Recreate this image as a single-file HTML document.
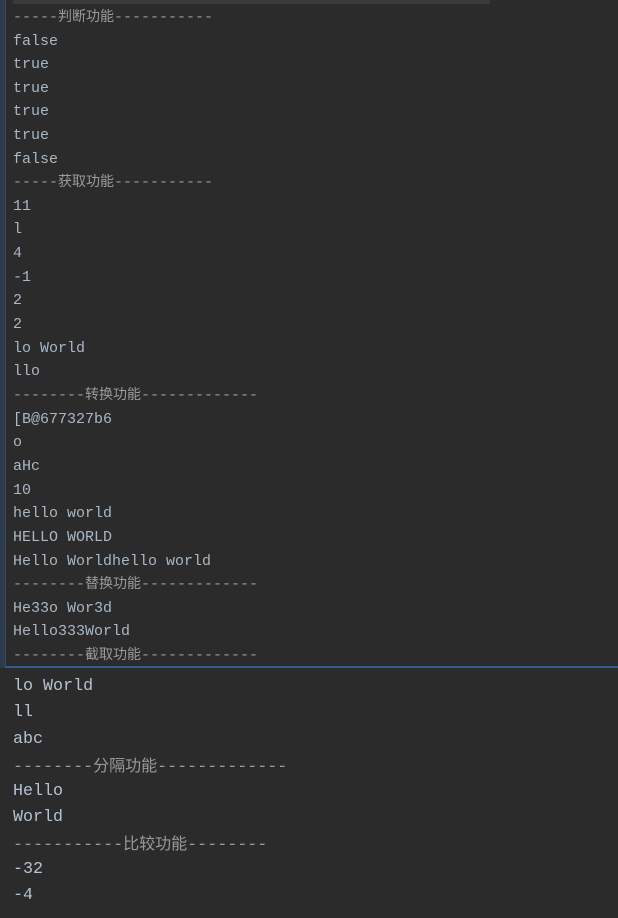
<!DOCTYPE html>
<html><head><meta charset="utf-8"><style>
body{margin:0;width:618px;height:918px;background:#2b2b2b;overflow:hidden;position:relative;font-family:"Liberation Mono","Noto Sans CJK SC",monospace}
#strip{position:absolute;left:0;top:0;width:5px;height:668px;background:#2c3a4e}
#top{position:absolute;left:5px;top:0;width:613px;height:666px;background:#2b2b2b;border-left:1px solid #3d4a5a;border-bottom:2px solid #2f5c8c}
#bar{position:absolute;left:13px;top:0;width:477px;height:4px;background:#3a3a3a}
.l{position:absolute;left:13px;white-space:pre;color:#a9b7c6;line-height:20px;margin-top:2px}
.l.c{margin-top:0}
.t{font-size:15px}
.b{font-size:16.7px;color:#b4c2d2}
.c{color:#9a9a9a}
.t .k{font-size:14px;font-family:"Noto Sans CJK SC",sans-serif}
.b .k{font-size:16px;font-family:"Noto Sans CJK SC",sans-serif}
</style></head><body>
<div id="strip"></div>
<div id="top"></div>
<div id="bar"></div>
<div class="l t c" style="top:6px">-----<span class="k">判断功能</span>-----------</div>
<div class="l t" style="top:30px">false</div>
<div class="l t" style="top:53px">true</div>
<div class="l t" style="top:77px">true</div>
<div class="l t" style="top:100px">true</div>
<div class="l t" style="top:124px">true</div>
<div class="l t" style="top:148px">false</div>
<div class="l t c" style="top:171px">-----<span class="k">获取功能</span>-----------</div>
<div class="l t" style="top:195px">11</div>
<div class="l t" style="top:218px">l</div>
<div class="l t" style="top:242px">4</div>
<div class="l t" style="top:266px">-1</div>
<div class="l t" style="top:289px">2</div>
<div class="l t" style="top:313px">2</div>
<div class="l t" style="top:337px">lo World</div>
<div class="l t" style="top:360px">llo</div>
<div class="l t c" style="top:384px">--------<span class="k">转换功能</span>-------------</div>
<div class="l t" style="top:408px">[B@677327b6</div>
<div class="l t" style="top:431px">o</div>
<div class="l t" style="top:455px">aHc</div>
<div class="l t" style="top:479px">10</div>
<div class="l t" style="top:502px">hello world</div>
<div class="l t" style="top:526px">HELLO WORLD</div>
<div class="l t" style="top:550px">Hello Worldhello world</div>
<div class="l t c" style="top:573px">--------<span class="k">替换功能</span>-------------</div>
<div class="l t" style="top:597px">He33o Wor3d</div>
<div class="l t" style="top:620px">Hello333World</div>
<div class="l t c" style="top:644px">--------<span class="k">截取功能</span>-------------</div>
<div class="l b" style="top:675px">lo World</div>
<div class="l b" style="top:701px">ll</div>
<div class="l b" style="top:728px">abc</div>
<div class="l b c" style="top:754px">--------<span class="k">分隔功能</span>-------------</div>
<div class="l b" style="top:780px">Hello</div>
<div class="l b" style="top:806px">World</div>
<div class="l b c" style="top:832px">-----------<span class="k">比较功能</span>--------</div>
<div class="l b" style="top:858px">-32</div>
<div class="l b" style="top:884px">-4</div>
</body></html>
